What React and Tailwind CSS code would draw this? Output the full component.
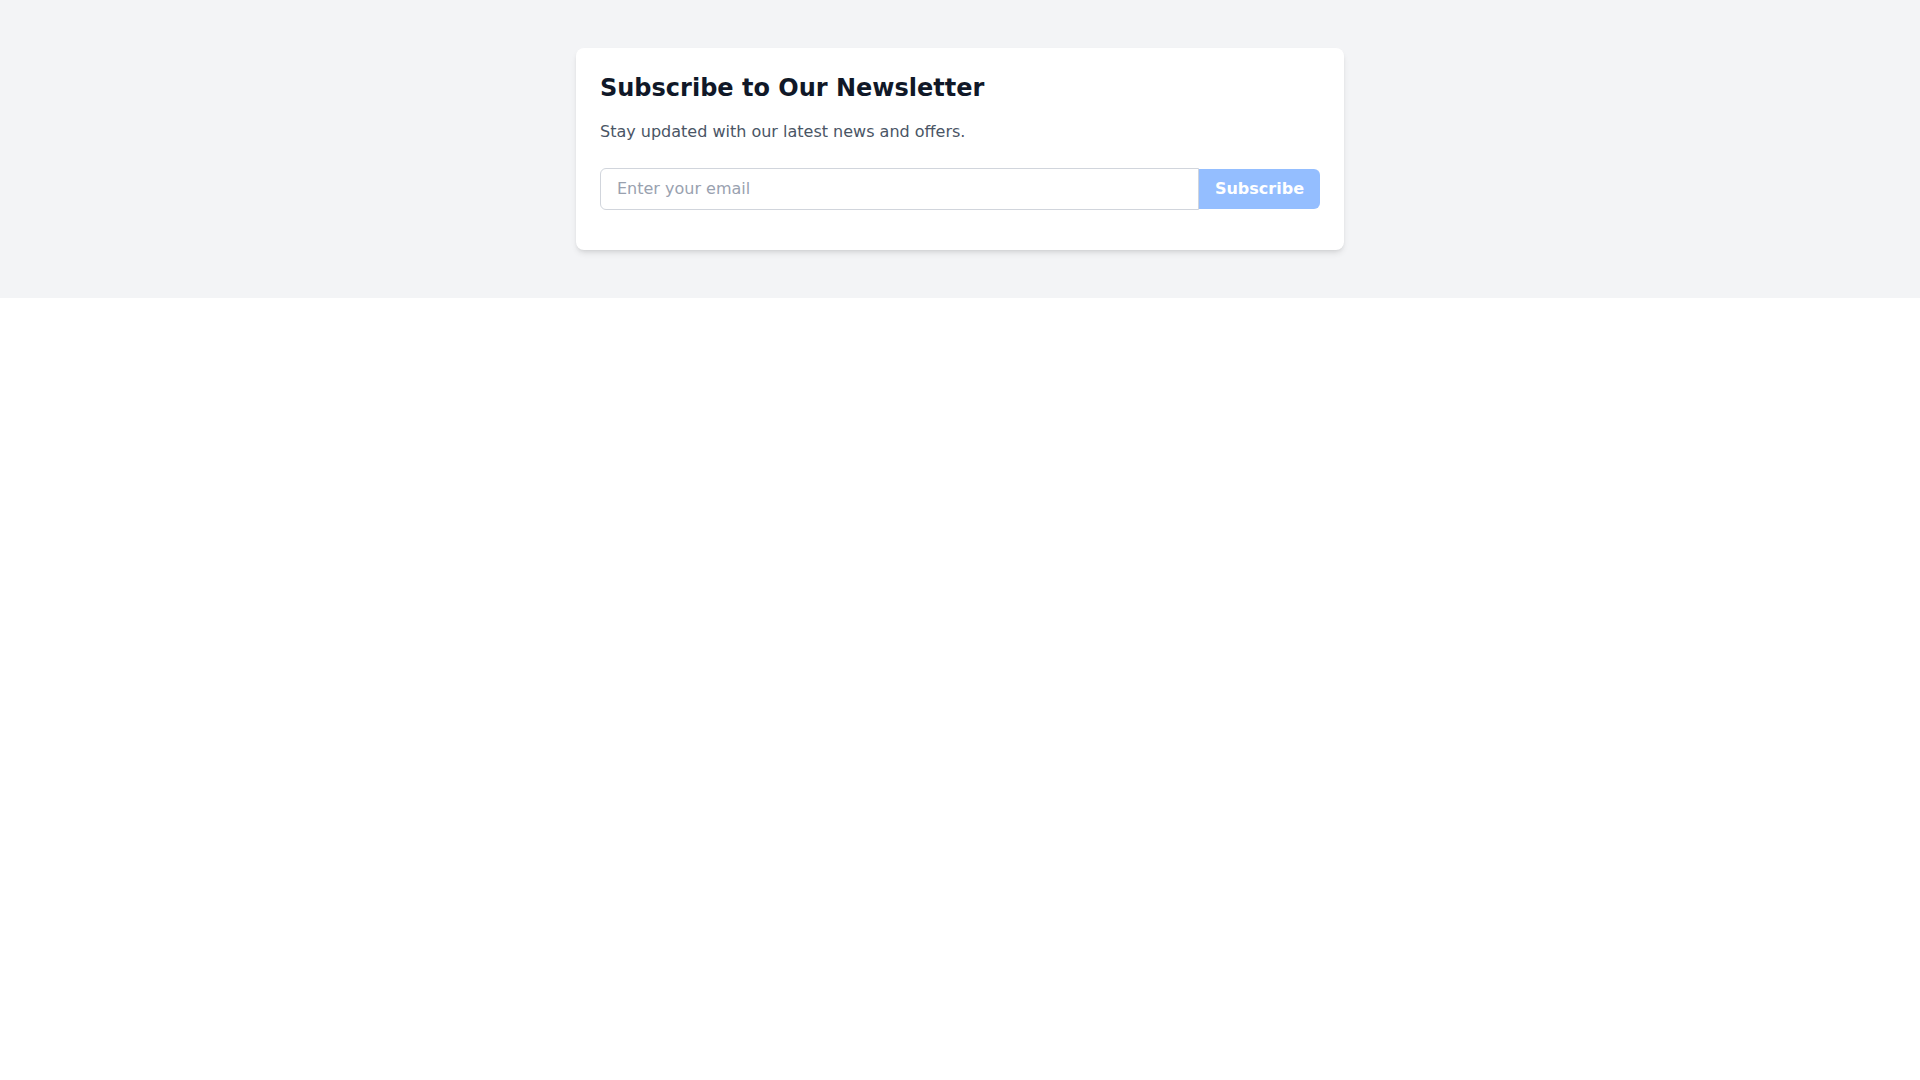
import { useState } from "react";

export default function App() {
  const [email, setEmail] = useState("");

  return (
    <div className="min-h-screen bg-white font-['DejaVu_Sans',sans-serif]">
      <section className="bg-gray-100 py-12">
        <div className="max-w-3xl mx-auto bg-white rounded-lg shadow-md p-6">
          <h2 className="text-2xl font-bold text-gray-900 mb-4">Subscribe to Our Newsletter</h2>
          <p className="text-base text-gray-600 mb-6">Stay updated with our latest news and offers.</p>
          <form className="flex items-center" onSubmit={(e) => e.preventDefault()}>
            <input
              type="email"
              value={email}
              onChange={(e) => setEmail(e.target.value)}
              placeholder="Enter your email"
              className="flex-1 px-4 py-2 border border-gray-300 rounded-l-md text-base text-gray-900 placeholder-gray-400 outline-none"
            />
            <button
              type="submit"
              disabled={!email}
              className="px-4 py-2 bg-blue-500 text-white font-bold rounded-r-md disabled:opacity-50"
            >
              Subscribe
            </button>
          </form>
          <div className="h-4" />
        </div>
      </section>
    </div>
  );
}
